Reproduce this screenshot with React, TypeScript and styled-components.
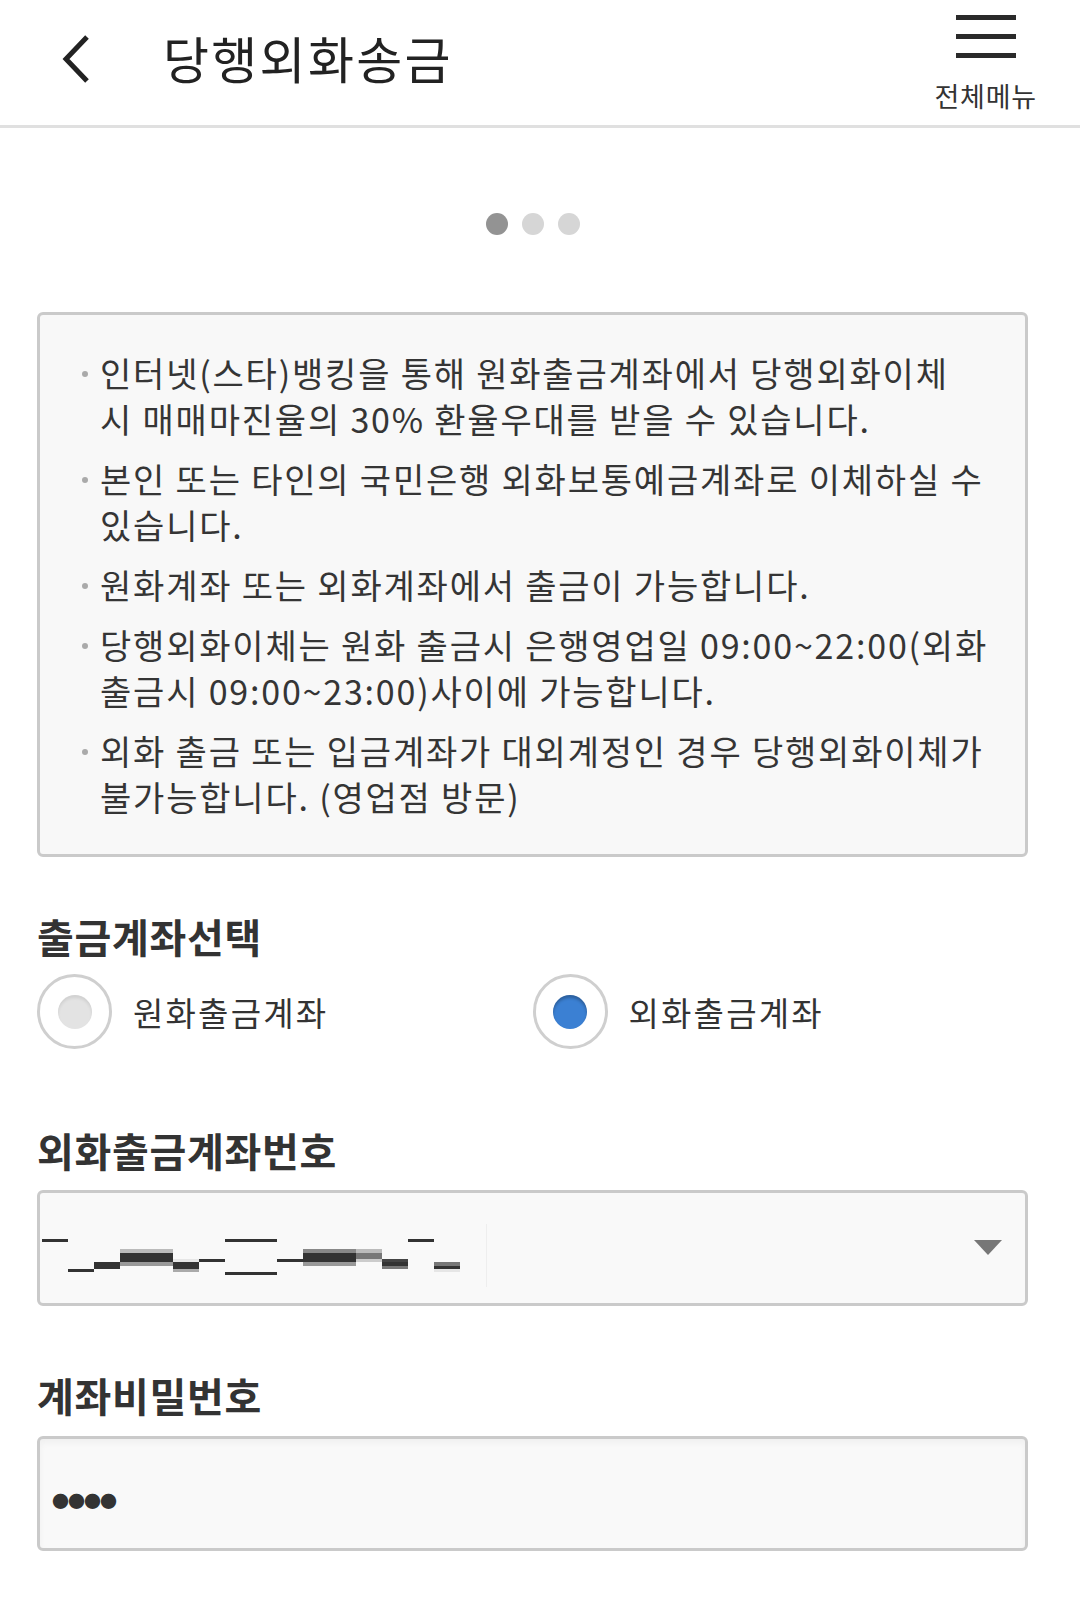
import { createGlobalStyle, styled } from 'styled-components';

const GlobalStyle = createGlobalStyle`
  body {
    margin: 0;
    background: #ffffff;
    font-family: "Noto Sans CJK KR", "Noto Sans", sans-serif;
    color: #333333;
  }
  * {
    box-sizing: border-box;
  }
`;

type radioProps = {
  checked: boolean;
};

type dotProps = {
  active: boolean;
};

const notices = [
  ['인터넷(스타)뱅킹을 통해 원화출금계좌에서 당행외화이체', '시 매매마진율의 30% 환율우대를 받을 수 있습니다.'],
  ['본인 또는 타인의 국민은행 외화보통예금계좌로 이체하실 수', '있습니다.'],
  ['원화계좌 또는 외화계좌에서 출금이 가능합니다.'],
  ['당행외화이체는 원화 출금시 은행영업일 09:00~22:00(외화', '출금시 09:00~23:00)사이에 가능합니다.'],
  ['외화 출금 또는 입금계좌가 대외계정인 경우 당행외화이체가', '불가능합니다. (영업점 방문)'],
];

// 가려진 계좌번호 (모자이크)
const mosaic: [number, number, number, number, string][] = [
  [2, 46, 26, 3, '#333'],
  [28, 76, 26, 3, '#333'],
  [54, 69, 26, 7, '#333'],
  [80, 56, 53, 4, '#bbb'],
  [80, 60, 53, 9, '#333'],
  [80, 69, 53, 4, '#999'],
  [133, 66, 26, 3, '#e6e6e6'],
  [133, 69, 26, 7, '#333'],
  [133, 76, 26, 3, '#aaa'],
  [159, 66, 26, 3, '#333'],
  [185, 46, 52, 3, '#333'],
  [185, 79, 52, 3, '#333'],
  [237, 66, 26, 3, '#333'],
  [263, 56, 53, 4, '#888'],
  [263, 60, 53, 9, '#333'],
  [263, 69, 53, 4, '#999'],
  [316, 56, 26, 4, '#bbb'],
  [316, 60, 26, 6, '#777'],
  [316, 66, 26, 3, '#ccc'],
  [342, 66, 26, 3, '#444'],
  [342, 69, 26, 4, '#333'],
  [342, 73, 26, 3, '#777'],
  [368, 46, 26, 3, '#333'],
  [394, 69, 26, 4, '#777'],
  [394, 73, 26, 3, '#333'],
  [394, 76, 26, 3, '#e6e6e6'],
];

const App = () => {
  return (
    <>
      <GlobalStyle />
      <Header>
        <BackButton type="button" aria-label="뒤로">
          <svg width="34" height="50" viewBox="0 0 34 50">
            <polyline
              points="27,3 6,25 27,47"
              fill="none"
              stroke="#222"
              strokeWidth="5"
              strokeLinejoin="miter"
            />
          </svg>
        </BackButton>
        <Title>당행외화송금</Title>
        <MenuButton type="button">
          <MenuLines>
            <span />
            <span />
            <span />
          </MenuLines>
          <MenuLabel>전체메뉴</MenuLabel>
        </MenuButton>
      </Header>

      <Main>
        <Pager>
          <PagerDot active />
          <PagerDot active={false} />
          <PagerDot active={false} />
        </Pager>

        <NoticeBox>
          {notices.map((lines, i) => (
            <NoticeItem key={i}>
              <Bullet />
              <NoticeText>
                {lines.map((line, j) => (
                  <span key={j}>
                    {line}
                    {j < lines.length - 1 && <br />}
                  </span>
                ))}
              </NoticeText>
            </NoticeItem>
          ))}
        </NoticeBox>

        <SectionTitle>출금계좌선택</SectionTitle>
        <RadioGroup>
          <RadioOption>
            <RadioCircle>
              <RadioInner checked={false} />
            </RadioCircle>
            <RadioText>원화출금계좌</RadioText>
          </RadioOption>
          <RadioOption>
            <RadioCircle>
              <RadioInner checked />
            </RadioCircle>
            <RadioText>외화출금계좌</RadioText>
          </RadioOption>
        </RadioGroup>

        <SectionTitle $gap={77}>외화출금계좌번호</SectionTitle>
        <SelectBox>
          <svg width="450" height="110" viewBox="0 0 450 110">
            {mosaic.map(([x, y, w, h, c], i) => (
              <rect key={i} x={x} y={y} width={w} height={h} fill={c} />
            ))}
            <rect x="446" y="31" width="1" height="63" fill="#eeeeee" />
          </svg>
          <SelectArrow width="28" height="16" viewBox="0 0 28 16">
            <polygon points="0,0 28,0 14,15" fill="#777" />
          </SelectArrow>
        </SelectBox>

        <SectionTitle $gap={65}>계좌비밀번호</SectionTitle>
        <PasswordBox>
          <PasswordDots>●●●●</PasswordDots>
        </PasswordBox>
      </Main>
    </>
  );
};

export default App;

const Header = styled.header`
  display: flex;
  align-items: flex-start;
  height: 128px;
  border-bottom: 3px solid #e0e0e0;
  padding: 0 60px 0 60px;
`;

const BackButton = styled.button`
  display: flex;
  width: 40px;
  margin-top: 34px;
  padding: 0;
  border: none;
  background: none;
`;

const Title = styled.h1`
  flex: 1;
  margin: 22px 0 0 63px;
  font-size: 50px;
  font-weight: 400;
  letter-spacing: 2.3px;
  line-height: 70px;
  color: #222222;
`;

const MenuButton = styled.button`
  display: flex;
  flex-direction: column;
  align-items: center;
  margin: 15px -17px 0 0;
  padding: 0;
  border: none;
  background: none;
  font-family: inherit;
`;

const MenuLines = styled.div`
  display: flex;
  flex-direction: column;
  gap: 14px;
  width: 60px;
  & > span {
    display: block;
    height: 5px;
    background: #2a2a2a;
  }
`;

const MenuLabel = styled.span`
  margin-top: 21px;
  font-size: 27px;
  letter-spacing: 0.8px;
  line-height: 34px;
  color: #333333;
`;

const Main = styled.main`
  padding: 0 52px 40px 37px;
`;

const Pager = styled.div`
  display: flex;
  justify-content: center;
  gap: 14px;
  margin: 85px 0 77px;
`;

const PagerDot = styled.span<dotProps>`
  width: 22px;
  height: 22px;
  border-radius: 50%;
  background: ${(props) => (props.active ? '#939393' : '#d6d6d6')};
`;

const NoticeBox = styled.ul`
  margin: 0;
  padding: 35px 10px 34px 42px;
  list-style: none;
  background: #f8f8f8;
  border: 3px solid #cacaca;
  border-radius: 6px;
  display: flex;
  flex-direction: column;
  gap: 14px;
`;

const NoticeItem = styled.li`
  display: flex;
  align-items: flex-start;
  gap: 12px;
`;

const Bullet = styled.span`
  flex: none;
  width: 6px;
  height: 6px;
  margin-top: 21px;
  border-radius: 50%;
  background: #aaaaaa;
`;

const NoticeText = styled.p`
  margin: 0;
  font-size: 34px;
  line-height: 46px;
  letter-spacing: 1.8px;
  color: #353535;
  white-space: nowrap;
`;

const SectionTitle = styled.h2<{ $gap?: number }>`
  margin: ${(props) => props.$gap ?? 55}px 0 0;
  font-size: 40px;
  font-weight: 700;
  letter-spacing: 0.7px;
  line-height: 48px;
  color: #333333;
`;

const RadioGroup = styled.div`
  display: grid;
  grid-template-columns: 1fr 1fr;
  margin-top: 14px;
`;

const RadioOption = styled.label`
  display: flex;
  align-items: center;
  gap: 21px;
`;

const RadioCircle = styled.span`
  display: flex;
  align-items: center;
  justify-content: center;
  width: 75px;
  height: 75px;
  border: 3px solid #cfcfcf;
  border-radius: 50%;
  background: #ffffff;
`;

const RadioInner = styled.span<radioProps>`
  width: 34px;
  height: 34px;
  border-radius: 50%;
  ${(props) =>
    props.checked
      ? `
        background: #3b80d3;
        box-shadow: inset 0 3px 3px rgba(0, 0, 0, 0.25);
        `
      : `
        background: #e3e3e3;
        box-shadow: inset 0 3px 3px rgba(0, 0, 0, 0.08);
        `}
`;

const RadioText = styled.span`
  font-size: 33px;
  letter-spacing: 2.2px;
  color: #333333;
`;

const SelectBox = styled.div`
  display: flex;
  align-items: center;
  justify-content: space-between;
  height: 116px;
  margin-top: 16px;
  padding: 0 23px 0 0;
  background: #f9f9f9;
  border: 3px solid #cacaca;
  border-radius: 6px;
`;

const SelectArrow = styled.svg`
  flex: none;
`;

const PasswordBox = styled.div`
  display: flex;
  align-items: center;
  height: 115px;
  margin-top: 17px;
  padding: 14px 12px 0;
  background: #f9f9f9;
  border: 3px solid #cacaca;
  border-radius: 6px;
  box-shadow: inset 0 4px 6px rgba(0, 0, 0, 0.04);
`;

const PasswordDots = styled.span`
  font-size: 17px;
  letter-spacing: -1px;
  color: #333333;
`;
